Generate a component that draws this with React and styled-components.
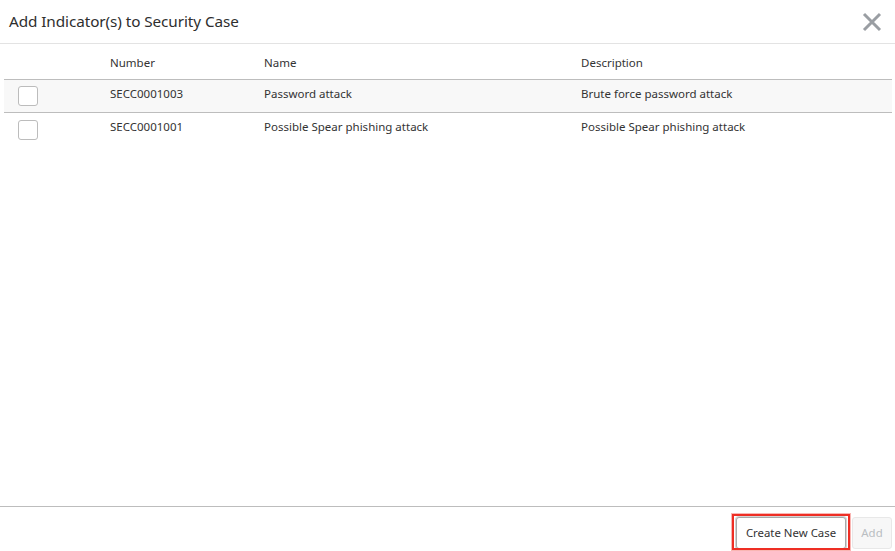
import React from "react";
import styled, { createGlobalStyle } from "styled-components";

const Global = createGlobalStyle`
  html, body { margin: 0; padding: 0; background: #fff; }
  body { font-family: "Noto Sans", "Open Sans", sans-serif; color: #2e3d49; }
`;

const Modal = styled.div`
  width: 895px;
  height: 551px;
  display: flex;
  flex-direction: column;
  overflow: hidden;
  background: #fff;
`;

const Header = styled.header`
  height: 43px;
  flex: none;
  display: flex;
  align-items: center;
  justify-content: space-between;
  padding: 0 13px 0 9px;
  border-bottom: 1px solid #e3e3e3;
`;

const Title = styled.h1`
  margin: 0 0 2px;
  font-size: 15.3px;
  font-weight: 400;
  letter-spacing: -0.08px;
  color: #2e2e2e;
`;

const Close = styled.button`
  border: 0;
  background: none;
  padding: 0;
  width: 20px;
  height: 20px;
  display: flex;
  color: #9a9ea3;
`;

const Body = styled.main`
  flex: 1;
  padding: 0 3px 0 4px;
`;

const Table = styled.table`
  width: 100%;
  border-collapse: separate;
  border-spacing: 0;
  table-layout: fixed;
  font-size: 11.5px;
  color: #333;
`;

const Head = styled.th`
  height: 36px;
  padding: 1px 0 0;
  box-sizing: border-box;
  text-align: left;
  font-weight: 400;
  width: ${(p) => p.$w}px;
  border-bottom: 1px solid #bdbdbd;
`;

const Row = styled.tr`
  background: ${(p) => (p.$shaded ? "#f8f8f8" : "#fff")};
`;

const Cell = styled.td`
  height: 33px;
  padding: 0 0 6px;
  box-sizing: border-box;
  border-bottom: ${(p) => (p.$line ? "1px solid #bdbdbd" : "0")};
`;

const CheckCell = styled(Cell)`
  padding: 0 0 0 14px;
`;

const Check = styled.span`
  display: block;
  width: 18px;
  height: 18px;
  border: 1px solid #bcbcbc;
  border-radius: 3px;
  background: #fff;
`;

const Footer = styled.footer`
  height: 45px;
  flex: none;
  border-top: 1px solid #bdbdbd;
  display: flex;
  align-items: flex-start;
  justify-content: flex-end;
  gap: 6px;
  padding: 10px 3px 0 0;
  box-sizing: border-box;
`;

const Button = styled.button`
  height: 32px;
  font-family: inherit;
  font-size: 11.4px;
  border-radius: 3px;
  background: ${(p) => (p.$disabled ? "#f7f7f7" : "#fff")};
  color: ${(p) => (p.$disabled ? "#b9bdc1" : "#333")};
  border: 1px solid ${(p) => (p.$disabled ? "#e8e8e8" : "#a9a9a9")};
  box-shadow: ${(p) => (p.$disabled ? "none" : "0 0 0 1px #d4d4d4")};
  width: ${(p) => p.$w}px;
  padding: 0 0 2px;
  position: relative;
`;

const Highlight = styled.span`
  position: absolute;
  inset: -4px -5px -2px -5px;
  border: 2px solid #ee2e24;
  box-shadow: 0 0 0 1px rgba(238, 46, 36, 0.35);
  pointer-events: none;
`;

const rows = [
  ["SECC0001003", "Password attack", "Brute force password attack"],
  ["SECC0001001", "Possible Spear phishing attack", "Possible Spear phishing attack"],
];

export default function App() {
  return (
    <Modal>
      <Global />
      <Header>
        <Title>Add Indicator(s) to Security Case</Title>
        <Close aria-label="Close">
          <svg width="20" height="20" viewBox="0 0 20 20">
            <path d="M2 2 L18 18 M18 2 L2 18" stroke="currentColor" strokeWidth="3" fill="none" />
          </svg>
        </Close>
      </Header>
      <Body>
        <Table>
          <thead>
            <tr>
              <Head $w={106} />
              <Head $w={154}>Number</Head>
              <Head $w={317}>Name</Head>
              <Head>Description</Head>
            </tr>
          </thead>
          <tbody>
            {rows.map((r, i) => (
              <Row key={r[0]} $shaded={i === 0}>
                <CheckCell $line={i === 0}><Check /></CheckCell>
                {r.map((t) => (
                  <Cell key={t} $line={i === 0}>{t}</Cell>
                ))}
              </Row>
            ))}
          </tbody>
        </Table>
      </Body>
      <Footer>
        <Button $w={110}>Create New Case<Highlight /></Button>
        <Button $w={40} $disabled>Add</Button>
      </Footer>
    </Modal>
  );
}
